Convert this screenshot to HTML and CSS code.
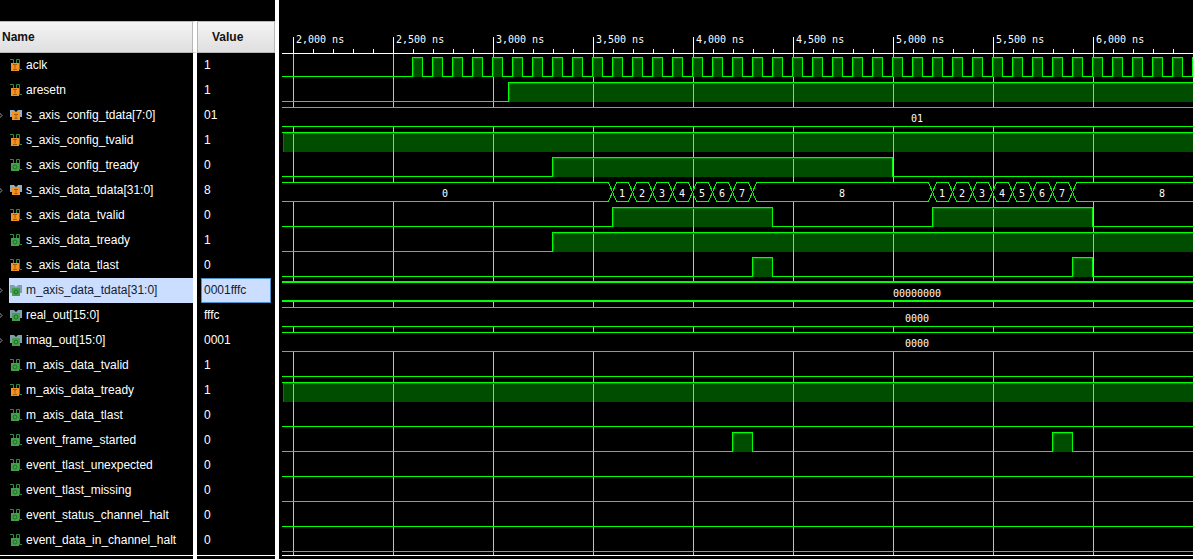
FILE: index.html
```html
<!DOCTYPE html>
<html lang="en">
<head>
<meta charset="utf-8">
<title>Waveform viewer</title>
<link rel="stylesheet" href="styles.css">
</head>
<body>
<svg class="defs" aria-hidden="true">
  <symbol id="wire" viewBox="0 0 12 12">
    <path class="icon-line" d="M0 .5H3.500V6M7.500 7V.5H9.500V11.500H12"/>
  </symbol>
  <symbol id="wire-in" viewBox="0 0 12 12">
    <path class="icon-line" d="M0 .5H3.500V6M6.500 7V.5H9.500V10.500H12"/>
    <path class="icon-orange" d="M1 4h8v8H1z"/>
    <path class="icon-mark-in" d="M3 5.500h4M5 5.500v4M3 10.500h4"/>
  </symbol>
  <symbol id="wire-out" viewBox="0 0 12 12">
    <path class="icon-line" d="M0 .5H3.500V6M6.500 7V.5H9.500V10.500H12"/>
    <path class="icon-green" d="M1 4h8v8H1z"/>
    <circle class="icon-mark-out" cx="5" cy="8" r="2"/>
  </symbol>
  <symbol id="bus-in" viewBox="0 0 12 12">
    <path class="icon-blue" d="M0 1h4l2 2 2-2h4v7H0z"/>
    <path class="icon-orange" d="M2 3h8v8H2z"/>
    <path class="icon-mark-in" d="M4 5.500h4M6 5.500v4M4.500 9.500h3"/>
  </symbol>
  <symbol id="bus-out" viewBox="0 0 12 12">
    <path class="icon-blue-dim" d="M0 1h4l2 2 2-2h4v8H0z"/>
    <path class="icon-green" d="M2 4h8v8H2z"/>
    <circle class="icon-mark-out" cx="6" cy="8" r="2"/>
  </symbol>
</svg>
<main class="viewer">
  <section class="signals">
    <table class="signal-table">
      <thead><tr><th class="name" scope="col">Name</th><th class="value" scope="col">Value</th></tr></thead>
      <tbody id="signal-rows"></tbody>
    </table>
  </section>
  <section class="waves" aria-label="Waveforms">
    <svg class="wave-canvas" id="waves"></svg>
  </section>
</main>
<script src="script.js"></script>
</body>
</html>
```

FILE: styles.css
```css
* { box-sizing: border-box; }
body {
  margin: 0;
  background: #000;
  color: #fff;
  font-family: "Liberation Sans", Arial, sans-serif;
  font-size: 12px;
}
.defs { position: absolute; width: 0; height: 0; }
.viewer { display: flex; min-height: 100vh; overflow: hidden; }

.signals {
  flex: none;
  display: flex;
  flex-direction: column;
  width: 279px;
  padding-top: 21px;
  border-right: 4px solid #fff;
}
.signal-table {
  width: 100%;
  border-collapse: separate;
  border-spacing: 0;
  table-layout: fixed;
}
.signals::after {
  content: "";
  flex: 1;
  background:
    linear-gradient(#fff, #fff) 193px 0 / 4px 100% no-repeat,
    linear-gradient(#fff, #fff) 0 2px / 100% 1px no-repeat;
}
th {
  height: 32px;
  padding: 0;
  border: 1px solid #b8b8b8;
  background: linear-gradient(#f4f4f4, #dfdfe1);
  color: #111;
  text-align: left;
}
th.name { width: 197px; padding-left: 2px; border-left: 0; border-right: 4px solid #fff; box-shadow: inset -1px 0 #b8b8b8; }
th.value { padding-left: 14px; }
td { height: 25px; padding: 0; }
td.name { border-right: 4px solid #fff; }
.cell { display: flex; align-items: center; height: 25px; white-space: nowrap; }
.arrow { flex: none; width: 9px; height: 7px; fill: none; stroke: #a0a0a0; }
.label { display: flex; flex: 1; align-items: center; gap: 4px; height: 25px; padding: 0 0 2px 1px; }
.icon { flex: none; width: 12px; height: 12px; }
.value .cell { margin: 0 4px; padding: 0 0 2px 3px; }
.selected .label { background: #ccdeff; color: #151b2b; }
.selected .value .cell { padding-left: 2px; border: 1px solid #4a90cc; background: #ccdeff; color: #151b2b; }

.icon-line { fill: none; stroke: #2f8c43; }
.icon-orange { fill: #f39325; }
.icon-green { fill: #44a04a; }
.icon-blue { fill: #8fb0c4; }
.icon-blue-dim { fill: #7f9fae; }
.icon-mark-in { fill: none; stroke: #a85c08; }
.icon-mark-out { fill: none; stroke: #22702c; }

.waves { flex: 1; min-width: 0; overflow: hidden; }
.wave-canvas { display: block; width: 100%; height: 559px; shape-rendering: crispEdges; }
.axis { stroke: #fff; fill: none; }
.grid { stroke: #c0c0c0; fill: none; }
.fill { fill: #00ff00; fill-opacity: .3; }
.glow { fill: none; stroke: #008000; }
.trace { fill: none; stroke: #00ff00; }
.bus { fill: #000; stroke: #00ff00; }
.bus.strong { stroke-width: 2px; }
.wave-text { fill: #fff; font-family: "DejaVu Sans Mono", monospace; font-size: 10px; }
.centered { text-anchor: middle; }
```

FILE: script.js
```js
const END = 2400;
const START = 3;

// Pulses are [rise, fall] pairs; buses hold [start, end, text, text centre].
const clock = Array.from({ length: 100 }, (_, i) => [133 + i * 20, 143 + i * 20]);
const burst = (first) => [1, 2, 3, 4, 5, 6, 7].map((n, i) =>
  [first + i * 20, first + 20 + i * 20, String(n), first + 10 + i * 20]);

const signals = [
  { name: "aclk", value: "1", icon: "wire-in", pulses: clock },
  { name: "aresetn", value: "1", icon: "wire-in", pulses: [[229, END]] },
  { name: "s_axis_config_tdata[7:0]", value: "01", icon: "bus-in", bus: [[START, END, "01", 638]] },
  { name: "s_axis_config_tvalid", value: "1", icon: "wire-in", pulses: [[START, END]] },
  { name: "s_axis_config_tready", value: "0", icon: "wire-out", pulses: [[273, 613]] },
  { name: "s_axis_data_tdata[31:0]", value: "8", icon: "bus-in", bus: [
    [START, 333, "0", 166], ...burst(333), [473, 653, "8", 563], ...burst(653), [793, END, "8", 883]] },
  { name: "s_axis_data_tvalid", value: "0", icon: "wire-in", pulses: [[333, 493], [653, 813]] },
  { name: "s_axis_data_tready", value: "1", icon: "wire-out", pulses: [[273, END]] },
  { name: "s_axis_data_tlast", value: "0", icon: "wire-in", pulses: [[473, 493], [793, 813]] },
  { name: "m_axis_data_tdata[31:0]", value: "0001fffc", icon: "bus-out", selected: true, bus: [[START, END, "00000000", 638]] },
  { name: "real_out[15:0]", value: "fffc", icon: "bus-out", bus: [[START, END, "0000", 638]] },
  { name: "imag_out[15:0]", value: "0001", icon: "bus-out", bus: [[START, END, "0000", 638]] },
  { name: "m_axis_data_tvalid", value: "1", icon: "wire-out", pulses: [] },
  { name: "m_axis_data_tready", value: "1", icon: "wire-in", pulses: [[START, END]] },
  { name: "m_axis_data_tlast", value: "0", icon: "wire-out", pulses: [] },
  { name: "event_frame_started", value: "0", icon: "wire-out", pulses: [[453, 473], [773, 793]] },
  { name: "event_tlast_unexpected", value: "0", icon: "wire-out", pulses: [] },
  { name: "event_tlast_missing", value: "0", icon: "wire-out", pulses: [] },
  { name: "event_status_channel_halt", value: "0", icon: "wire-out", pulses: [] },
  { name: "event_data_in_channel_halt", value: "0", icon: "wire-out", pulses: [] }
];

document.getElementById("signal-rows").innerHTML = signals.map((s) => `
  <tr class="${s.selected ? "selected" : ""}">
    <td class="name"><div class="cell">
      <svg class="arrow" viewBox="0 0 9 7">${s.bus ? '<path d="M-1 .5L2 3.500L-1 6.500"/>' : ""}</svg>
      <span class="label"><svg class="icon"><use href="#${s.icon}"/></svg>${s.name}</span>
    </div></td>
    <td class="value"><div class="cell">${s.value}</div></td>
  </tr>`).join("");

const canvas = document.getElementById("waves");

function draw() {
  const visible = canvas.parentElement.clientWidth;
  let axis = `M${START} 53.500H${END}`;
  let grid = "";
  let out = "";
  for (let x = 14; x < END; x += 20) {
    const major = (x - 14) % 100 === 0;
    axis += `M${x + 0.5} ${major ? 37 : 49}V54`;
    if (major) {
      grid += `M${x + 0.5} 54V556`;
      const ns = (2000 + (x - 14) * 5).toLocaleString("en-US");
      if (x + 55 < visible) {
        out += `<text class="wave-text" x="${x + 3}" y="43">${ns} ns</text>`;
      }
    }
  }
  out += `<path class="grid" d="${grid}"/><path class="axis" d="${axis}M${START} 555.500H${END}"/>`;

  signals.forEach((s, row) => {
    const top = 57.5 + row * 25;
    const low = top + 19;
    const mid = top + 9.5;
    if (s.bus) {
      const edge = s.selected ? 0.5 : 0;
      s.bus.forEach(([a, b, text, cx]) => {
        const right = b === END
          ? `H${END}V${low - edge}`
          : `H${b - 3.5}L${b + 0.5} ${mid}L${b - 3.5} ${low}`;
        const shape = a === START
          ? `M0 ${top - edge}${right}H0`
          : `M${a + 0.5} ${mid}L${a + 4.5} ${top}${right}H${a + 4.5}Z`;
        out += `<path class="bus${s.selected ? " strong" : ""}" d="${shape}"/>`;
        out += `<text class="wave-text centered" x="${cx}" y="${mid + 5}">${text}</text>`;
      });
      return;
    }
    let line = `M${START} ${low}`;
    s.pulses.forEach(([a, b]) => {
      out += `<rect class="fill" x="${a + 1}" y="${top}" width="${b - a}" height="19.500"/>`;
      out += `<path class="glow" d="M${a + 1.5} ${low}V${top + 1}H${b}"/>`;
      line += a === START ? `M${a} ${top}H${b}` : `H${a + 0.5}V${top}H${b + 0.5}V${low}`;
    });
    if (!s.pulses.length || s.pulses[s.pulses.length - 1][1] !== END) line += `H${END}`;
    out += `<path class="trace" d="${line}"/>`;
  });

  // The canvas keeps a narrow empty margin beside the splitter.
  out += '<rect x="0" y="0" width="3" height="559"/>';
  canvas.innerHTML = out;
}

draw();
window.addEventListener("resize", draw);
```
